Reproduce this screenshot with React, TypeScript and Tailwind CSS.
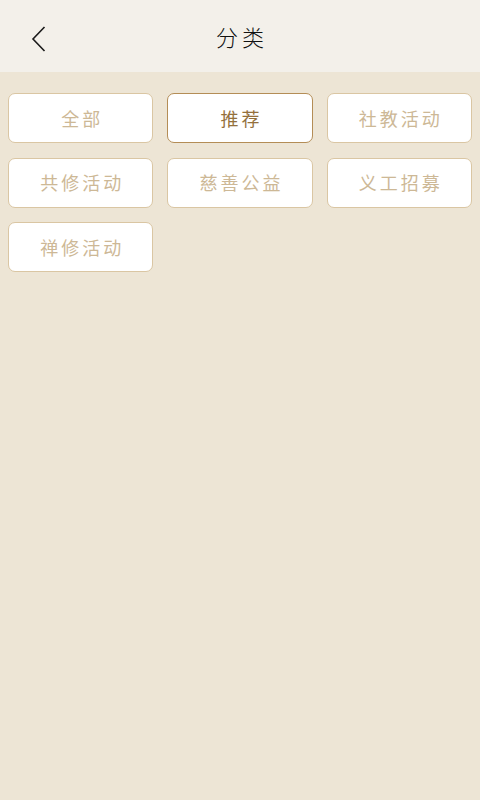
const categories = [
  { name: "全部", active: false },
  { name: "推荐", active: true },
  { name: "社教活动", active: false },
  { name: "共修活动", active: false },
  { name: "慈善公益", active: false },
  { name: "义工招募", active: false },
  { name: "禅修活动", active: false },
];

export default function App() {
  return (
    <div className="flex min-h-[800px] w-[480px] flex-col bg-[#ede5d5] font-['Noto_Sans_CJK_SC',sans-serif]">
      <header className="relative flex h-[72px] items-center justify-center bg-[#f3f0ea]">
        <button className="absolute left-[26px] top-[22px] flex h-[34px] w-[26px] items-center justify-center">
          <svg width="16" height="28" viewBox="0 0 16 28" fill="none">
            <path d="M13.5 2 L2 14 L13.5 26" stroke="#1a1a1a" strokeWidth="1.6" />
          </svg>
        </button>
        <h1 className="pl-[4px] text-[22px] font-light tracking-[4px] text-[#111]">分类</h1>
      </header>
      <div className="grid grid-cols-3 gap-x-[14px] gap-y-[14.5px] px-[8px] pt-[21px]">
        {categories.map((c) => (
          <div
            key={c.name}
            className={
              c.active
                ? "flex h-[50px] items-center justify-center rounded-[7px] border-[1.5px] border-[#b48d56] bg-white pl-[3px] text-[18px] tracking-[3px] text-[#94703c]"
                : "flex h-[50px] items-center justify-center rounded-[7px] border-[1.5px] border-[#dac6a3] bg-white pl-[3px] text-[18px] tracking-[3px] text-[#cdb896]"
            }
          >
            {c.name}
          </div>
        ))}
      </div>
    </div>
  );
}
